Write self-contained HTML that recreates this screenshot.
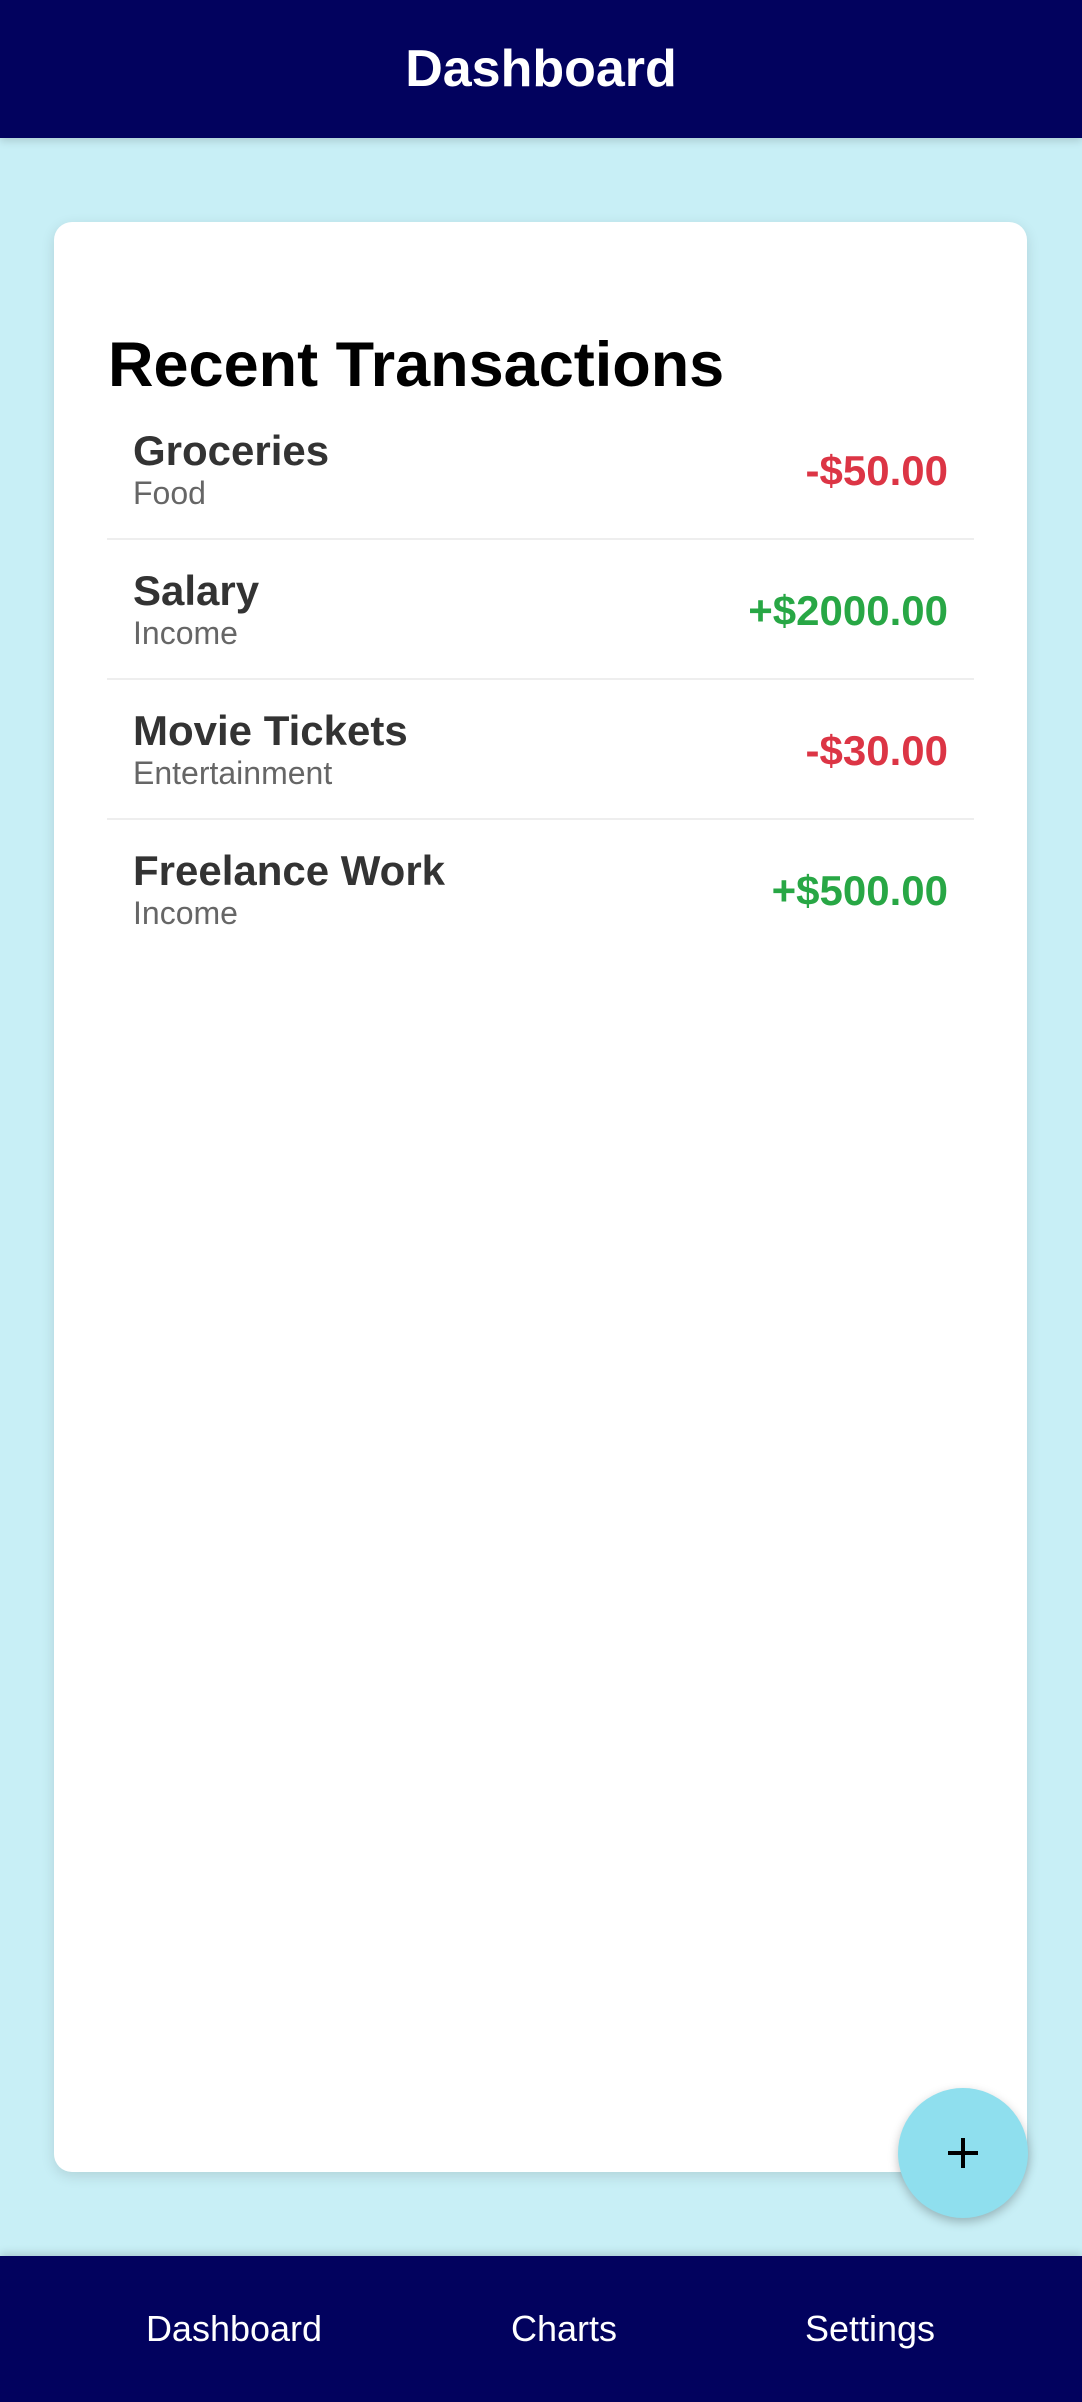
<!DOCTYPE html>
<html><head><meta charset="utf-8"><style>
*{margin:0;padding:0;box-sizing:border-box}
body{width:1082px;height:2402px;background:#c8eff6;font-family:"Liberation Sans",Arial,sans-serif;position:relative;overflow:hidden}
.hdr{position:absolute;left:0;top:0;width:1082px;height:138px;background:#02025e;color:#fff;font-weight:bold;font-size:52px;text-align:center;line-height:138px;box-shadow:0 3px 8px rgba(0,0,0,.15)}
.card{position:absolute;left:54px;top:222px;width:973px;height:1950px;background:#fff;border-radius:18px;box-shadow:0 4px 14px rgba(0,0,0,.12)}
h1{position:absolute;left:54px;top:103px;font-size:63px;font-weight:bold;color:#000;line-height:80px}
.row{position:absolute;left:53px;width:867px;height:140px;border-bottom:2px solid #eee}
.n{position:absolute;left:26px;top:28px;font-size:42px;font-weight:bold;color:#333;line-height:46px}
.s{position:absolute;left:26px;top:75px;font-size:32px;color:#666;line-height:36px}
.a{position:absolute;right:26px;top:48px;font-size:42px;font-weight:bold;line-height:46px}
.r{color:#dc3545}.g{color:#28a745}
.fab{position:absolute;left:898px;top:2088px;width:130px;height:130px;border-radius:50%;background:#8fdfee;box-shadow:0 4px 10px rgba(0,0,0,.25)}
.fab:before{content:"";position:absolute;left:50px;top:63px;width:30px;height:4px;background:#000}
.fab:after{content:"";position:absolute;left:63px;top:50px;width:4px;height:30px;background:#000}
.nav{position:absolute;left:0;top:2256px;width:1082px;height:146px;background:#02025e;box-shadow:0 -3px 8px rgba(0,0,0,.15)}
.nav span{position:absolute;top:52px;font-size:36px;color:#fff;line-height:42px;transform:translateX(-50%)}
</style></head><body>
<div class="hdr">Dashboard</div>
<div class="card">
<h1>Recent Transactions</h1>
<div class="row" style="top:178px"><div class="n">Groceries</div><div class="s">Food</div><div class="a r">-$50.00</div></div>
<div class="row" style="top:318px"><div class="n">Salary</div><div class="s">Income</div><div class="a g">+$2000.00</div></div>
<div class="row" style="top:458px"><div class="n">Movie Tickets</div><div class="s">Entertainment</div><div class="a r">-$30.00</div></div>
<div class="row" style="top:598px;border-bottom:none"><div class="n">Freelance Work</div><div class="s">Income</div><div class="a g">+$500.00</div></div>
</div>
<div class="fab"></div>
<div class="nav"><span style="left:234px">Dashboard</span><span style="left:564px">Charts</span><span style="left:870px">Settings</span></div>
</body></html>
